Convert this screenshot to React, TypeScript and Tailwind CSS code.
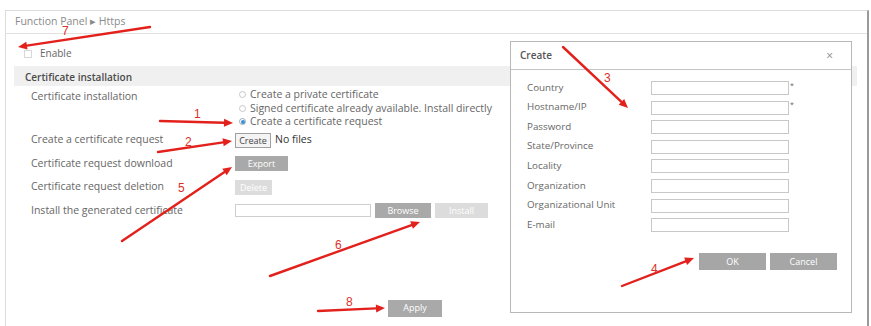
import React from 'react'

const font = { fontFamily: '"Open Sans", "Noto Sans", sans-serif' }

function Btn({ label, tone, w }: { label: string; tone: 'dark' | 'light' | 'plain'; w: string }) {
  const tones = {
    dark: 'bg-[#a9a9a9] text-white',
    light: 'bg-[#dcdcdc] text-white',
    plain: 'bg-[#f4f4f4] text-[#444] border border-[#a0a0a0]',
  }
  return (
    <div className={`${w} h-[15px] flex items-center justify-center text-[9px] ${tones[tone]}`}>{label}</div>
  )
}

const rows = [
  { label: 'Create a certificate request' },
  { label: 'Certificate request download' },
  { label: 'Certificate request deletion' },
  { label: 'Install the generated certificate' },
]

const dialogFields = [
  { label: 'Country', required: true },
  { label: 'Hostname/IP', required: true },
  { label: 'Password', required: false },
  { label: 'State/Province', required: false },
  { label: 'Locality', required: false },
  { label: 'Organization', required: false },
  { label: 'Organizational Unit', required: false },
  { label: 'E-mail', required: false },
]

function Arrow({ x1, y1, x2, y2 }: { x1: number; y1: number; x2: number; y2: number }) {
  const a = Math.atan2(y2 - y1, x2 - x1)
  const len = 9
  const w = 4
  const bx = x2 - Math.cos(a) * len
  const by = y2 - Math.sin(a) * len
  const p1 = `${bx + Math.sin(a) * w},${by - Math.cos(a) * w}`
  const p2 = `${bx - Math.sin(a) * w},${by + Math.cos(a) * w}`
  return (
    <g>
      <line x1={x1} y1={y1} x2={bx} y2={by} stroke="#e3211c" strokeWidth={2.4} strokeLinecap="round" />
      <polygon points={`${x2},${y2} ${p1} ${p2}`} fill="#e3211c" />
    </g>
  )
}

export default function App() {
  return (
    <div className="relative w-[871px] h-[326px] bg-white overflow-hidden text-[#666]" style={font}>
      <div className="ml-[5px] mt-[10px] w-[864px] h-[330px] border-l border-t border-[#dcdcdc] border-r-2 border-r-[#9a9a9a]">
        <div className="h-[23px] border-b border-[#e2e2e2] pl-[9px] flex items-center text-[10.5px] text-[#8a8a8a]">
          Function Panel ▸ Https
        </div>

        <div className="pl-[8px] pr-[10px]">
          <div className="h-[32px] flex items-center gap-[8px] pl-[10px] pt-[7px]">
            <div className="w-[8px] h-[8px] border border-[#d8d8d8] bg-white" />
            <span className="text-[10px]">Enable</span>
          </div>

          <div className="h-[20px] bg-[#f0f0f0] flex items-end pl-[11px] pb-[1px] text-[10px] font-semibold text-[#4a4a4a]">
            Certificate installation
          </div>

          <div className="flex pt-[2px]">
            <div className="w-[221px] pl-[17px] text-[10.5px] leading-[14px] pt-[1px]">Certificate installation</div>
            <div className="flex flex-col text-[10.5px] leading-[13.5px] pl-[4px]">
              <div className="flex items-center gap-[4px]">
                <div className="w-[7px] h-[7px] rounded-full border border-[#c8c8c8]" />
                Create a private certificate
              </div>
              <div className="flex items-center gap-[4px]">
                <div className="w-[7px] h-[7px] rounded-full border border-[#c8c8c8]" />
                Signed certificate already available. Install directly
              </div>
              <div className="flex items-center gap-[4px]">
                <div className="w-[7px] h-[7px] rounded-full border border-[#9ab] flex items-center justify-center">
                  <div className="w-[4px] h-[4px] rounded-full bg-[#3d8fd1]" />
                </div>
                Create a certificate request
              </div>
            </div>
          </div>

          <div className="flex flex-col">
            {rows.map((r, i) => (
              <div key={r.label} className="h-[23.5px] flex items-center">
                <div className="w-[221px] pl-[17px] text-[10.5px]">{r.label}</div>
                {i === 0 && (
                  <div className="flex items-center gap-[4px]">
                    <Btn label="Create" tone="plain" w="w-[36px]" />
                    <span className="text-[10.5px] text-[#333]">No files</span>
                  </div>
                )}
                {i === 1 && <Btn label="Export" tone="dark" w="w-[53px]" />}
                {i === 2 && <Btn label="Delete" tone="light" w="w-[37px]" />}
                {i === 3 && (
                  <div className="flex items-center gap-[4px]">
                    <div className="w-[136px] h-[13px] border border-[#cfcfcf] bg-white" />
                    <Btn label="Browse" tone="dark" w="w-[56px]" />
                    <Btn label="Install" tone="light" w="w-[53px]" />
                  </div>
                )}
              </div>
            ))}
          </div>

          <div className="flex pl-[374px] pt-[77px]">
            <div className="w-[54px] h-[17px] bg-[#a9a9a9] text-white text-[9px] flex items-center justify-center">Apply</div>
          </div>
        </div>
      </div>

      {/* Create dialog */}
      <div className="absolute left-[510px] top-[41px] w-[342px] h-[272px] bg-white border border-[#b8b8b8]">
        <div className="h-[28px] border-b border-[#c4c4c4] flex items-center justify-between pl-[9px] pr-[18px]">
          <span className="text-[10px] font-semibold text-[#555]">Create</span>
          <span className="text-[12px] text-[#8c8c8c]">×</span>
        </div>
        <div className="pt-[11px] pl-[16px] flex flex-col gap-[5.6px]">
          {dialogFields.map(f => (
            <div key={f.label} className="flex items-center h-[14px]">
              <div className="w-[124px] text-[9.8px]">{f.label}</div>
              <div className="w-[138px] h-[14px] border border-[#c8c8c8] bg-white" />
              {f.required && <span className="text-[7px] ml-[1px] -mt-[4px]">*</span>}
            </div>
          ))}
        </div>
        <div className="flex justify-end gap-[4px] pr-[14px] pt-[21px]">
          <div className="w-[67px] h-[17px] bg-[#a6a6a6] text-white text-[9px] flex items-center justify-center">OK</div>
          <div className="w-[67px] h-[17px] bg-[#a6a6a6] text-white text-[9px] flex items-center justify-center">Cancel</div>
        </div>
      </div>

      {/* annotation arrows */}
      <svg className="absolute inset-0 pointer-events-none" width={871} height={326} viewBox="0 0 871 326">
        <Arrow x1={150} y1={27} x2={18} y2={47} />
        <Arrow x1={160} y1={121} x2={233} y2={123} />
        <Arrow x1={158} y1={152} x2={232} y2={141} />
        <Arrow x1={122} y1={241} x2={232} y2={167} />
        <Arrow x1={270} y1={276} x2={420} y2={222} />
        <Arrow x1={318} y1={311} x2={385} y2={308} />
        <Arrow x1={563} y1={47} x2={628} y2={108} />
        <Arrow x1={622} y1={286} x2={694} y2={258} />
        <g fill="#d9302a" fontSize="12" fontFamily="Liberation Sans, sans-serif">
          <text x={62} y={35}>7</text>
          <text x={194} y={118}>1</text>
          <text x={185} y={146}>2</text>
          <text x={178} y={192}>5</text>
          <text x={335} y={249}>6</text>
          <text x={346} y={306}>8</text>
          <text x={604} y={82}>3</text>
          <text x={651} y={273}>4</text>
        </g>
      </svg>
    </div>
  )
}
